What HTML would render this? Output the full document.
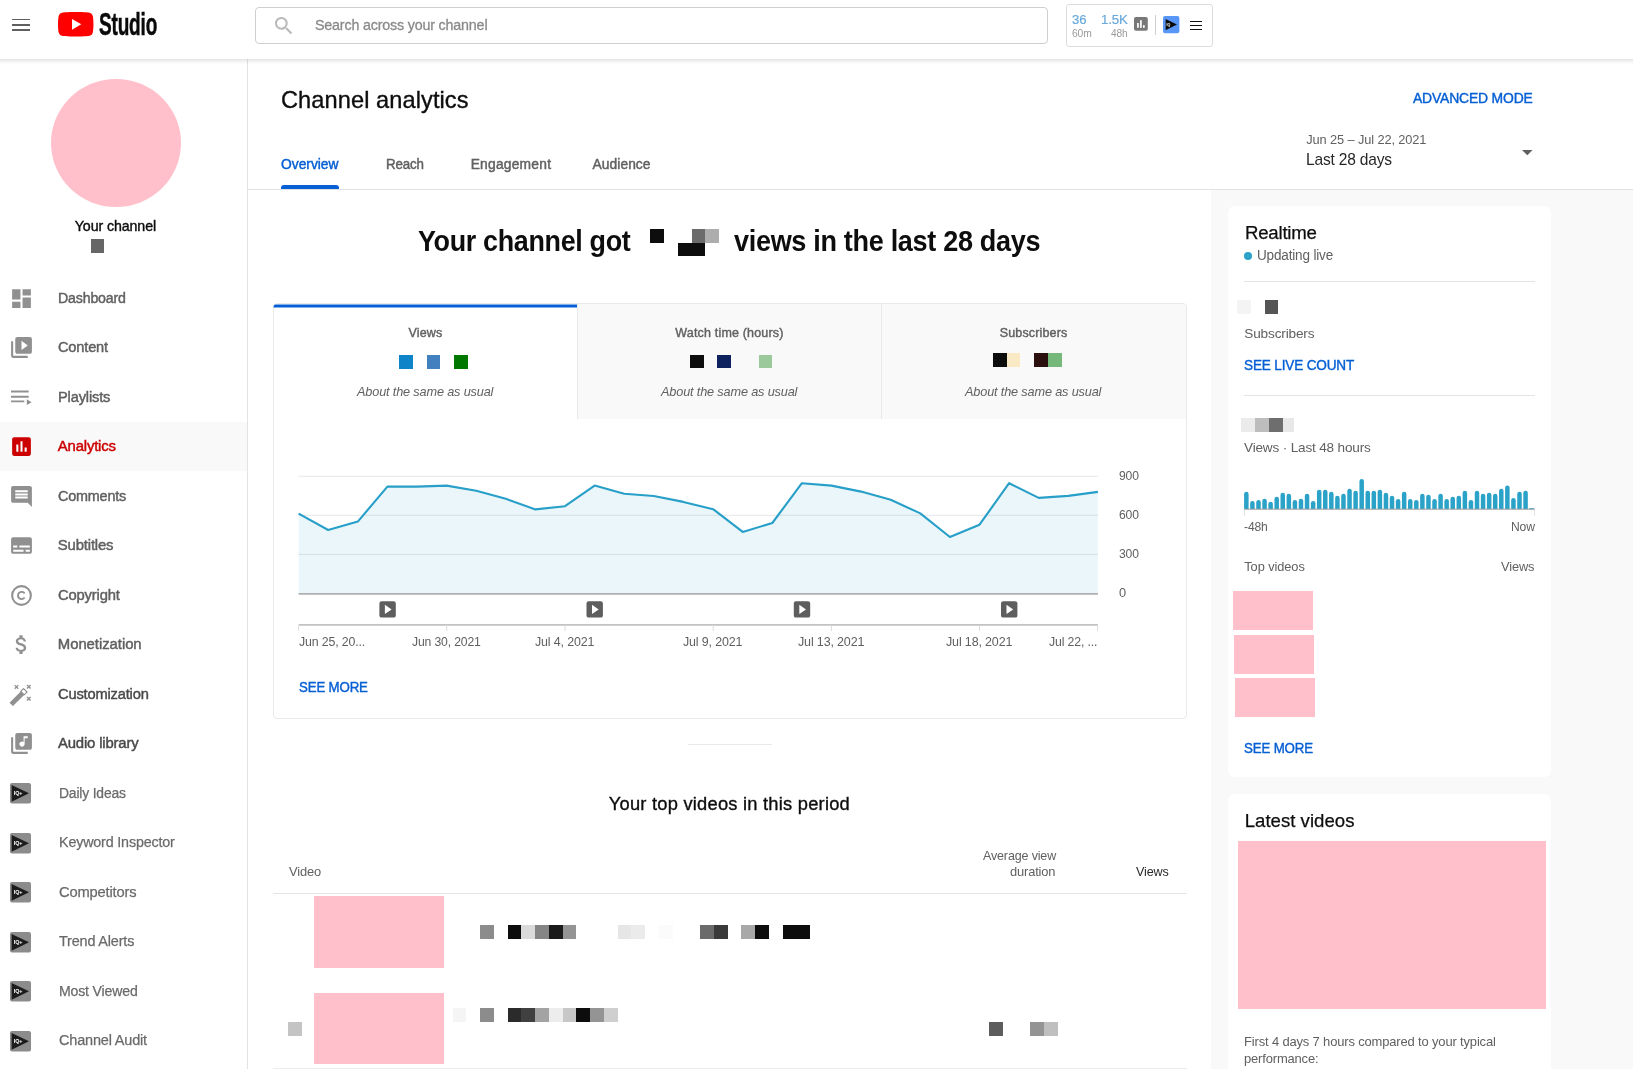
<!DOCTYPE html>
<html lang="en"><head><meta charset="utf-8"><title>Channel analytics - YouTube Studio</title>
<style>
*{box-sizing:border-box;margin:0;padding:0}
html,body{width:1633px;height:1079px;overflow:hidden;background:#fff}
body{position:relative;font-family:"Liberation Sans",Arial,sans-serif;color:#606060}
.t{position:absolute;white-space:nowrap;line-height:1;display:block}
.a{position:absolute;display:block}
svg{position:absolute;display:block;overflow:visible}
.px{position:absolute;display:block}
.pink{position:absolute;background:#ffc0cb}
#app{position:absolute;left:0;top:0;width:1633px;height:1079px;will-change:transform}
</style></head><body>
<div id="app">
<nav>
<div class="a" style="left:0;top:59px;width:248px;height:1010px;background:#fff;border-right:1px solid #e3e3e3"></div>
<div class="a" style="left:50.6px;top:79px;width:130.4px;height:128.4px;border-radius:50%;background:#ffc0cb"></div>
<span class="t" style="left:74.80px;top:219.00px;font-size:14.2px;color:#0d0d0d;letter-spacing:-0.089px;-webkit-text-stroke:0.4px #0d0d0d;">Your channel</span>
<i class="px" style="left:90.7px;top:239.4px;width:13.5px;height:13.5px;background:#666"></i>
<svg style="left:8.6px;top:285.60px" width="25" height="25" viewBox="0 0 24 24" fill="#909090" stroke="#909090" stroke-width="0"><path d="M3 13h8V3H3v10zm0 8h8v-6H3v6zm10 0h8V11h-8v10zm0-18v6h8V3h-8z"/></svg>
<span class="t" style="left:57.80px;top:291.00px;font-size:14.9px;color:#606060;letter-spacing:-0.179px;transform:scaleX(0.9516);transform-origin:0 0;-webkit-text-stroke:0.45px #606060;">Dashboard</span>
<svg style="left:8.6px;top:335.10px" width="25" height="25" viewBox="0 0 24 24" fill="#909090" stroke="#909090" stroke-width="0"><path d="M4 6H2v14c0 1.1.9 2 2 2h14v-2H4V6zm16-4H8c-1.1 0-2 .9-2 2v12c0 1.1.9 2 2 2h12c1.1 0 2-.9 2-2V4c0-1.1-.9-2-2-2zm-8 12.500v-9l6 4.500-6 4.500z"/></svg>
<span class="t" style="left:57.80px;top:340.00px;font-size:14.9px;color:#606060;letter-spacing:-0.179px;transform:scaleX(0.9802);transform-origin:0 0;-webkit-text-stroke:0.45px #606060;">Content</span>
<svg style="left:8.6px;top:384.60px" width="25" height="25" viewBox="0 0 24 24" fill="#909090" stroke="#909090" stroke-width="0"><path d="M1.92 5.18H18.91V7.20H1.92zM1.92 10.27H18.91V12.29H1.92zM1.92 14.78H14.69V16.61H1.92zM17.09 13.73V19.30L21.70 16.51z"/></svg>
<span class="t" style="left:57.80px;top:390.00px;font-size:14.9px;color:#606060;letter-spacing:-0.179px;transform:scaleX(0.9847);transform-origin:0 0;-webkit-text-stroke:0.45px #606060;">Playlists</span>
<div class="a" style="left:0;top:421.75px;width:247px;height:49.5px;background:#f9f9f9"></div>
<svg style="left:8.6px;top:434.10px" width="25" height="25" viewBox="0 0 24 24" fill="#c00" stroke="#c00" stroke-width="0"><path d="M19 3H5c-1.100 0-2 .900-2 2v14c0 1.100.900 2 2 2h14c1.100 0 2-.900 2-2V5c0-1.100-.900-2-2-2zM9 17H7v-7h2v7zm4 0h-2V7h2v10zm4 0h-2v-4h2v4z"/></svg>
<span class="t" style="left:57.80px;top:439.00px;font-size:14.9px;color:#c00;letter-spacing:-0.179px;-webkit-text-stroke:0.45px #c00;">Analytics</span>
<svg style="left:8.6px;top:483.60px" width="25" height="25" viewBox="0 0 24 24" fill="#909090" stroke="#909090" stroke-width="0"><path d="M21.990 4c0-1.100-.890-2-1.990-2H4c-1.100 0-2 .900-2 2v12c0 1.100.900 2 2 2h14l4 4-.010-18zM18 14H6v-2h12v2zm0-3H6V9h12v2zm0-3H6V6h12v2z"/></svg>
<span class="t" style="left:57.80px;top:489.00px;font-size:14.9px;color:#606060;letter-spacing:-0.179px;transform:scaleX(0.9649);transform-origin:0 0;-webkit-text-stroke:0.45px #606060;">Comments</span>
<svg style="left:8.6px;top:533.10px" width="25" height="25" viewBox="0 0 24 24" fill="#909090" stroke="#909090" stroke-width="0"><path d="M20 4H4c-1.100 0-2 .900-2 2v12c0 1.100.900 2 2 2h16c1.100 0 2-.900 2-2V6c0-1.100-.900-2-2-2zM4 12h4v2H4v-2zm10 6H4v-2h10v2zm6 0h-4v-2h4v2zm0-4H10v-2h10v2z"/></svg>
<span class="t" style="left:57.80px;top:538.00px;font-size:14.9px;color:#606060;letter-spacing:-0.169px;-webkit-text-stroke:0.45px #606060;">Subtitles</span>
<svg style="left:8.6px;top:582.60px" width="25" height="25" viewBox="0 0 24 24" fill="#909090" stroke="#909090" stroke-width="0"><circle cx="12" cy="12" r="9" fill="none" stroke-width="2"/><path d="M15 14a3.500 3.500 0 1 1 0-4" fill="none" stroke-width="1.800"/></svg>
<span class="t" style="left:57.80px;top:588.00px;font-size:14.9px;color:#606060;letter-spacing:-0.179px;transform:scaleX(0.9930);transform-origin:0 0;-webkit-text-stroke:0.45px #606060;">Copyright</span>
<svg style="left:8.6px;top:632.10px" width="25" height="25" viewBox="0 0 24 24" fill="#909090" stroke="#909090" stroke-width="0"><path d="M11.800 10.900c-2.270-.590-3-1.200-3-2.150 0-1.090 1.010-1.850 2.700-1.850 1.780 0 2.440.850 2.500 2.100h2.210c-.070-1.720-1.120-3.300-3.210-3.810V3h-3v2.160c-1.940.420-3.500 1.680-3.500 3.610 0 2.310 1.910 3.460 4.700 4.130 2.500.600 3 1.480 3 2.410 0 .690-.490 1.790-2.700 1.790-2.060 0-2.870-.920-2.980-2.100h-2.200c.120 2.190 1.760 3.420 3.680 3.830V21h3v-2.150c1.950-.370 3.500-1.500 3.500-3.550 0-2.840-2.430-3.810-4.700-4.400z"/></svg>
<span class="t" style="left:57.80px;top:637.00px;font-size:14.9px;color:#606060;letter-spacing:-0.053px;-webkit-text-stroke:0.45px #606060;">Monetization</span>
<svg style="left:8.6px;top:681.60px" width="25" height="25" viewBox="0 0 24 24" fill="#909090" stroke="#909090" stroke-width="0"><path d="M0.500 19.800L12.200 8.100l3.300 3.300L3.800 23.100z"/><path d="M11.300 9l2.700-2.700 3.300 3.300-2.700 2.700z" fill="#fff" stroke-width="1.100"/><g stroke-width="1.300" fill="none"><path d="M5.500 3l3.400 3.400m0-3.400l-3.400 3.400"/><path d="M17.300 2.800l3.400 3.400m0-3.400l-3.400 3.400"/><path d="M17.300 14.400l3.400 3.400m0-3.400l-3.400 3.400"/></g></svg>
<span class="t" style="left:58.00px;top:687.00px;font-size:14.9px;color:#4a4a4a;letter-spacing:-0.179px;transform:scaleX(0.9853);transform-origin:0 0;-webkit-text-stroke:0.45px #4a4a4a;">Customization</span>
<svg style="left:8.6px;top:731.10px" width="25" height="25" viewBox="0 0 24 24" fill="#909090" stroke="#909090" stroke-width="0"><path d="M20 2H8c-1.100 0-2 .900-2 2v12c0 1.100.900 2 2 2h12c1.100 0 2-.900 2-2V4c0-1.100-.900-2-2-2zm-2 5h-3v5.500c0 1.380-1.120 2.500-2.500 2.500S10 13.880 10 12.500s1.120-2.500 2.500-2.500c.570 0 1.080.190 1.500.510V5h4v2zM4 6H2v14c0 1.100.900 2 2 2h14v-2H4V6z"/></svg>
<span class="t" style="left:58.00px;top:736.00px;font-size:14.9px;color:#4a4a4a;letter-spacing:-0.179px;-webkit-text-stroke:0.45px #4a4a4a;">Audio library</span>
<svg style="left:9.9px;top:783.00px" width="21" height="20.6" viewBox="0 0 21 20.6"><rect width="21" height="20.6" rx="2" fill="#8c8c8c"/><path d="M1.600 1.900L19 10.300 1.600 18.700z" fill="#1c1c1c"/><text x="3.700" y="12.200" font-size="5.400" font-weight="700" fill="#fff" font-family="Liberation Sans,sans-serif">IQ+</text></svg>
<span class="t" style="left:59.10px;top:786.00px;font-size:14.9px;color:#6a6a6a;letter-spacing:-0.179px;transform:scaleX(0.9316);transform-origin:0 0;-webkit-text-stroke:0.25px #6a6a6a;">Daily Ideas</span>
<svg style="left:9.9px;top:832.50px" width="21" height="20.6" viewBox="0 0 21 20.6"><rect width="21" height="20.6" rx="2" fill="#8c8c8c"/><path d="M1.600 1.900L19 10.300 1.600 18.700z" fill="#1c1c1c"/><text x="3.700" y="12.200" font-size="5.400" font-weight="700" fill="#fff" font-family="Liberation Sans,sans-serif">IQ+</text></svg>
<span class="t" style="left:59.10px;top:835.00px;font-size:14.9px;color:#6a6a6a;letter-spacing:-0.179px;transform:scaleX(0.9615);transform-origin:0 0;-webkit-text-stroke:0.25px #6a6a6a;">Keyword Inspector</span>
<svg style="left:9.9px;top:882.00px" width="21" height="20.6" viewBox="0 0 21 20.6"><rect width="21" height="20.6" rx="2" fill="#8c8c8c"/><path d="M1.600 1.900L19 10.300 1.600 18.700z" fill="#1c1c1c"/><text x="3.700" y="12.200" font-size="5.400" font-weight="700" fill="#fff" font-family="Liberation Sans,sans-serif">IQ+</text></svg>
<span class="t" style="left:59.10px;top:885.00px;font-size:14.9px;color:#6a6a6a;letter-spacing:-0.179px;transform:scaleX(0.9881);transform-origin:0 0;-webkit-text-stroke:0.25px #6a6a6a;">Competitors</span>
<svg style="left:9.9px;top:931.50px" width="21" height="20.6" viewBox="0 0 21 20.6"><rect width="21" height="20.6" rx="2" fill="#8c8c8c"/><path d="M1.600 1.900L19 10.300 1.600 18.700z" fill="#1c1c1c"/><text x="3.700" y="12.200" font-size="5.400" font-weight="700" fill="#fff" font-family="Liberation Sans,sans-serif">IQ+</text></svg>
<span class="t" style="left:59.10px;top:934.00px;font-size:14.9px;color:#6a6a6a;letter-spacing:-0.179px;transform:scaleX(0.9690);transform-origin:0 0;-webkit-text-stroke:0.25px #6a6a6a;">Trend Alerts</span>
<svg style="left:9.9px;top:981.00px" width="21" height="20.6" viewBox="0 0 21 20.6"><rect width="21" height="20.6" rx="2" fill="#8c8c8c"/><path d="M1.600 1.900L19 10.300 1.600 18.700z" fill="#1c1c1c"/><text x="3.700" y="12.200" font-size="5.400" font-weight="700" fill="#fff" font-family="Liberation Sans,sans-serif">IQ+</text></svg>
<span class="t" style="left:59.10px;top:984.00px;font-size:14.9px;color:#6a6a6a;letter-spacing:-0.179px;transform:scaleX(0.9467);transform-origin:0 0;-webkit-text-stroke:0.25px #6a6a6a;">Most Viewed</span>
<svg style="left:9.9px;top:1030.50px" width="21" height="20.6" viewBox="0 0 21 20.6"><rect width="21" height="20.6" rx="2" fill="#8c8c8c"/><path d="M1.600 1.900L19 10.300 1.600 18.700z" fill="#1c1c1c"/><text x="3.700" y="12.200" font-size="5.400" font-weight="700" fill="#fff" font-family="Liberation Sans,sans-serif">IQ+</text></svg>
<span class="t" style="left:59.10px;top:1033.00px;font-size:14.9px;color:#6a6a6a;letter-spacing:-0.179px;transform:scaleX(0.9731);transform-origin:0 0;-webkit-text-stroke:0.25px #6a6a6a;">Channel Audit</span>
</nav>
<main>
<aside>
<div class="a" style="left:1211px;top:190px;width:422px;height:879px;background:#f9f9f9"></div>
<div class="a" style="left:1227.5px;top:206.4px;width:323.700px;height:570.800px;background:#fff;border-radius:7px"></div>
<div class="a" style="left:1227.5px;top:794.3px;width:323.700px;height:274.700px;background:#fff;border-radius:7px 7px 0 0"></div>
<span class="t" style="left:1244.80px;top:224.00px;font-size:18.8px;color:#0d0d0d;letter-spacing:-0.226px;transform:scaleX(0.9917);transform-origin:0 0;-webkit-text-stroke:0.25px #0d0d0d;">Realtime</span>
<i class="a" style="left:1244px;top:251.500px;width:8.400px;height:8.400px;border-radius:50%;background:#2ba3c9"></i>
<span class="t" style="left:1256.80px;top:249.00px;font-size:13.8px;color:#606060;letter-spacing:-0.166px;transform:scaleX(0.9795);transform-origin:0 0;">Updating live</span>
<i class="a" style="left:1244px;top:281px;width:291px;height:1px;background:#e4e4e4"></i>
<i class="px" style="left:1237.30px;top:300.30px;width:13.70px;height:13.70px;background:#f4f4f4"></i>
<i class="px" style="left:1264.80px;top:300.30px;width:13.70px;height:13.70px;background:#555"></i>
<span class="t" style="left:1244.30px;top:327.00px;font-size:13.6px;color:#606060;letter-spacing:-0.163px;">Subscribers</span>
<span class="t" style="left:1244.30px;top:358.00px;font-size:14.2px;color:#065fd4;letter-spacing:-0.170px;transform:scaleX(0.9570);transform-origin:0 0;-webkit-text-stroke:0.4px #065fd4;">SEE LIVE COUNT</span>
<i class="a" style="left:1244px;top:395px;width:291px;height:1px;background:#e4e4e4"></i>
<i class="px" style="left:1241.10px;top:418.10px;width:13.80px;height:13.60px;background:#ebebeb"></i>
<i class="px" style="left:1254.90px;top:418.10px;width:14.00px;height:13.60px;background:#bdbdbd"></i>
<i class="px" style="left:1268.90px;top:418.10px;width:13.80px;height:13.60px;background:#6e6e6e"></i>
<i class="px" style="left:1282.70px;top:418.10px;width:10.90px;height:13.60px;background:#e8e8e8"></i>
<span class="t" style="left:1244.30px;top:441.00px;font-size:13.6px;color:#606060;letter-spacing:-0.163px;transform:scaleX(0.9971);transform-origin:0 0;">Views · Last 48 hours</span>
<svg style="left:0;top:0" width="1633" height="1079" viewBox="0 0 1633 1079">
<path d="M1244.10 509v-15.1a2.250 2.250 0 0 1 4.500 0v15.1z" fill="#2ba3c9"/>
<path d="M1250.17 509v-5.8a2.250 2.250 0 0 1 4.500 0v5.8z" fill="#2ba3c9"/>
<path d="M1256.24 509v-6.8a2.250 2.250 0 0 1 4.500 0v6.8z" fill="#2ba3c9"/>
<path d="M1262.31 509v-8.0a2.250 2.250 0 0 1 4.500 0v8.0z" fill="#2ba3c9"/>
<path d="M1268.38 509v-4.9a2.250 2.250 0 0 1 4.500 0v4.9z" fill="#2ba3c9"/>
<path d="M1274.45 509v-10.0a2.250 2.250 0 0 1 4.500 0v10.0z" fill="#2ba3c9"/>
<path d="M1280.52 509v-14.0a2.250 2.250 0 0 1 4.500 0v14.0z" fill="#2ba3c9"/>
<path d="M1286.59 509v-13.0a2.250 2.250 0 0 1 4.500 0v13.0z" fill="#2ba3c9"/>
<path d="M1292.66 509v-6.8a2.250 2.250 0 0 1 4.500 0v6.8z" fill="#2ba3c9"/>
<path d="M1298.73 509v-8.0a2.250 2.250 0 0 1 4.500 0v8.0z" fill="#2ba3c9"/>
<path d="M1304.80 509v-13.0a2.250 2.250 0 0 1 4.500 0v13.0z" fill="#2ba3c9"/>
<path d="M1310.87 509v-5.8a2.250 2.250 0 0 1 4.500 0v5.8z" fill="#2ba3c9"/>
<path d="M1316.94 509v-17.1a2.250 2.250 0 0 1 4.500 0v17.1z" fill="#2ba3c9"/>
<path d="M1323.01 509v-17.1a2.250 2.250 0 0 1 4.500 0v17.1z" fill="#2ba3c9"/>
<path d="M1329.08 509v-15.1a2.250 2.250 0 0 1 4.500 0v15.1z" fill="#2ba3c9"/>
<path d="M1335.15 509v-10.9a2.250 2.250 0 0 1 4.500 0v10.9z" fill="#2ba3c9"/>
<path d="M1341.22 509v-13.0a2.250 2.250 0 0 1 4.500 0v13.0z" fill="#2ba3c9"/>
<path d="M1347.29 509v-18.1a2.250 2.250 0 0 1 4.500 0v18.1z" fill="#2ba3c9"/>
<path d="M1353.36 509v-16.1a2.250 2.250 0 0 1 4.500 0v16.1z" fill="#2ba3c9"/>
<path d="M1359.43 509v-27.7a2.250 2.250 0 0 1 4.500 0v27.7z" fill="#2ba3c9"/>
<path d="M1365.50 509v-16.1a2.250 2.250 0 0 1 4.500 0v16.1z" fill="#2ba3c9"/>
<path d="M1371.57 509v-16.1a2.250 2.250 0 0 1 4.500 0v16.1z" fill="#2ba3c9"/>
<path d="M1377.64 509v-17.1a2.250 2.250 0 0 1 4.500 0v17.1z" fill="#2ba3c9"/>
<path d="M1383.71 509v-14.0a2.250 2.250 0 0 1 4.500 0v14.0z" fill="#2ba3c9"/>
<path d="M1389.78 509v-10.9a2.250 2.250 0 0 1 4.500 0v10.9z" fill="#2ba3c9"/>
<path d="M1395.85 509v-7.8a2.250 2.250 0 0 1 4.500 0v7.8z" fill="#2ba3c9"/>
<path d="M1401.92 509v-15.1a2.250 2.250 0 0 1 4.500 0v15.1z" fill="#2ba3c9"/>
<path d="M1407.99 509v-7.8a2.250 2.250 0 0 1 4.500 0v7.8z" fill="#2ba3c9"/>
<path d="M1414.06 509v-6.8a2.250 2.250 0 0 1 4.500 0v6.8z" fill="#2ba3c9"/>
<path d="M1420.13 509v-13.0a2.250 2.250 0 0 1 4.500 0v13.0z" fill="#2ba3c9"/>
<path d="M1426.20 509v-11.9a2.250 2.250 0 0 1 4.500 0v11.9z" fill="#2ba3c9"/>
<path d="M1432.27 509v-7.8a2.250 2.250 0 0 1 4.500 0v7.8z" fill="#2ba3c9"/>
<path d="M1438.34 509v-13.0a2.250 2.250 0 0 1 4.500 0v13.0z" fill="#2ba3c9"/>
<path d="M1444.41 509v-7.8a2.250 2.250 0 0 1 4.500 0v7.8z" fill="#2ba3c9"/>
<path d="M1450.48 509v-10.0a2.250 2.250 0 0 1 4.500 0v10.0z" fill="#2ba3c9"/>
<path d="M1456.55 509v-10.9a2.250 2.250 0 0 1 4.500 0v10.9z" fill="#2ba3c9"/>
<path d="M1462.62 509v-16.1a2.250 2.250 0 0 1 4.500 0v16.1z" fill="#2ba3c9"/>
<path d="M1468.69 509v-6.8a2.250 2.250 0 0 1 4.500 0v6.8z" fill="#2ba3c9"/>
<path d="M1474.76 509v-16.1a2.250 2.250 0 0 1 4.500 0v16.1z" fill="#2ba3c9"/>
<path d="M1480.83 509v-13.0a2.250 2.250 0 0 1 4.500 0v13.0z" fill="#2ba3c9"/>
<path d="M1486.90 509v-14.0a2.250 2.250 0 0 1 4.500 0v14.0z" fill="#2ba3c9"/>
<path d="M1492.97 509v-13.0a2.250 2.250 0 0 1 4.500 0v13.0z" fill="#2ba3c9"/>
<path d="M1499.04 509v-18.1a2.250 2.250 0 0 1 4.500 0v18.1z" fill="#2ba3c9"/>
<path d="M1505.11 509v-21.2a2.250 2.250 0 0 1 4.500 0v21.2z" fill="#2ba3c9"/>
<path d="M1511.18 509v-8.8a2.250 2.250 0 0 1 4.500 0v8.8z" fill="#2ba3c9"/>
<path d="M1517.25 509v-15.1a2.250 2.250 0 0 1 4.500 0v15.1z" fill="#2ba3c9"/>
<path d="M1523.32 509v-16.1a2.250 2.250 0 0 1 4.500 0v16.1z" fill="#2ba3c9"/>
<rect x="1529.39" y="508.2" width="4.500" height="1" fill="#2ba3c9"/>
<rect x="1244" y="508.7" width="291" height="1" fill="#9a9a9a"/>
<rect x="1244" y="509.7" width="1" height="6" fill="#e2e2e2"/><rect x="1534" y="509.7" width="1" height="6" fill="#e2e2e2"/>
</svg>
<span class="t" style="left:1244.30px;top:521.00px;font-size:12.3px;color:#606060;letter-spacing:-0.148px;transform:scaleX(0.9845);transform-origin:0 0;">-48h</span>
<span class="t" style="left:1510.70px;top:521.00px;font-size:12.3px;color:#606060;letter-spacing:-0.148px;transform:scaleX(0.9831);transform-origin:0 0;">Now</span>
<span class="t" style="left:1244.30px;top:561.00px;font-size:12.8px;color:#606060;letter-spacing:-0.077px;">Top videos</span>
<span class="t" style="left:1501.10px;top:561.00px;font-size:12.8px;color:#606060;letter-spacing:-0.128px;">Views</span>
<div class="pink" style="left:1232.900px;top:590.900px;width:79.900px;height:38.800px"></div>
<div class="pink" style="left:1233.900px;top:634.900px;width:80.100px;height:38.900px"></div>
<div class="pink" style="left:1234.800px;top:678px;width:80.100px;height:38.900px"></div>
<span class="t" style="left:1244.30px;top:741.00px;font-size:14.2px;color:#065fd4;letter-spacing:-0.170px;transform:scaleX(0.9367);transform-origin:0 0;-webkit-text-stroke:0.4px #065fd4;">SEE MORE</span>
<span class="t" style="left:1244.70px;top:812.00px;font-size:18.6px;color:#0d0d0d;letter-spacing:0.016px;-webkit-text-stroke:0.25px #0d0d0d;">Latest videos</span>
<div class="pink" style="left:1238px;top:841px;width:308px;height:167.600px"></div>
<span class="t" style="left:1244.40px;top:1035.00px;font-size:13.1px;color:#606060;letter-spacing:-0.157px;transform:scaleX(0.9903);transform-origin:0 0;">First 4 days 7 hours compared to your typical</span>
<span class="t" style="left:1244.40px;top:1052.00px;font-size:13.1px;color:#606060;letter-spacing:-0.157px;transform:scaleX(0.9887);transform-origin:0 0;">performance:</span>
</aside>
<section>
<span class="t" style="left:281.00px;top:89.00px;font-size:23.6px;color:#0d0d0d;letter-spacing:0.082px;-webkit-text-stroke:0.35px #0d0d0d;">Channel analytics</span>
<span class="t" style="left:1413.00px;top:91.00px;font-size:14.2px;color:#065fd4;letter-spacing:-0.170px;transform:scaleX(0.9800);transform-origin:0 0;-webkit-text-stroke:0.4px #065fd4;">ADVANCED MODE</span>
<span class="t" style="left:1306.20px;top:134.00px;font-size:12.8px;color:#606060;letter-spacing:-0.105px;">Jun 25 – Jul 22, 2021</span>
<span class="t" style="left:1306.20px;top:151.00px;font-size:16.2px;color:#282828;letter-spacing:-0.194px;transform:scaleX(0.9607);transform-origin:0 0;">Last 28 days</span>
<svg style="left:1521.5px;top:150.3px" width="10.6" height="5.2" viewBox="0 0 10.6 5.2"><path d="M0 0h10.600L5.300 5.200z" fill="#5f5f5f"/></svg>
<span class="t" style="left:281.00px;top:158.00px;font-size:13.8px;color:#065fd4;letter-spacing:-0.002px;-webkit-text-stroke:0.45px #065fd4;">Overview</span>
<span class="t" style="left:385.60px;top:158.00px;font-size:13.8px;color:#606060;letter-spacing:-0.166px;transform:scaleX(0.9661);transform-origin:0 0;-webkit-text-stroke:0.45px #606060;">Reach</span>
<span class="t" style="left:470.70px;top:158.00px;font-size:13.8px;color:#606060;letter-spacing:0.227px;-webkit-text-stroke:0.45px #606060;">Engagement</span>
<span class="t" style="left:592.60px;top:158.00px;font-size:13.8px;color:#606060;letter-spacing:0.051px;-webkit-text-stroke:0.45px #606060;">Audience</span>
<i class="a" style="left:281px;top:185.3px;width:57.6px;height:3.7px;background:#065fd4;border-radius:3px 3px 0 0"></i>
<i class="a" style="left:248px;top:189px;width:1385px;height:1px;background:#e2e2e2"></i>
</section>
<section>
<span class="t" style="left:418.10px;top:226.00px;font-size:30.0px;color:#0d0d0d;letter-spacing:-0.360px;transform:scaleX(0.8960);transform-origin:0 0;font-weight:700;">Your channel got</span>
<span class="t" style="left:734.10px;top:226.00px;font-size:30.0px;color:#0d0d0d;letter-spacing:-0.360px;transform:scaleX(0.9018);transform-origin:0 0;font-weight:700;">views in the last 28 days</span>
<i class="px" style="left:650.20px;top:229.00px;width:13.80px;height:13.80px;background:#0d0d0d"></i>
<i class="px" style="left:678.00px;top:242.80px;width:27.40px;height:13.60px;background:#0d0d0d"></i>
<i class="px" style="left:691.90px;top:229.00px;width:13.50px;height:13.80px;background:#6b6b6b"></i>
<i class="px" style="left:705.40px;top:229.00px;width:13.70px;height:13.80px;background:#adadad"></i>
<div class="a" style="left:272.5px;top:303px;width:914px;height:416px;border:1px solid #e9e9e9;border-radius:4px;background:#fff"></div>
<div class="a" style="left:577px;top:304px;width:608.5px;height:114.7px;background:#f9f9f9;border-radius:0 3px 0 0"></div>
<i class="a" style="left:576.7px;top:304px;width:1px;height:114.7px;background:#e9e9e9"></i>
<i class="a" style="left:881.3px;top:304px;width:1px;height:114.7px;background:#e9e9e9"></i>
<svg style="left:0;top:0" width="1633" height="320" viewBox="0 0 1633 320"><path d="M273.600 307.400V306.300a2 2 0 0 1 2-1.900H577v3z" fill="#065fd4"/></svg>
<span class="t" style="left:408.50px;top:327.00px;font-size:12.5px;color:#606060;letter-spacing:0.146px;-webkit-text-stroke:0.4px #606060;">Views</span>
<span class="t" style="left:675.30px;top:327.00px;font-size:12.5px;color:#606060;letter-spacing:0.176px;-webkit-text-stroke:0.4px #606060;">Watch time (hours)</span>
<span class="t" style="left:999.80px;top:327.00px;font-size:12.5px;color:#606060;letter-spacing:0.140px;-webkit-text-stroke:0.4px #606060;">Subscribers</span>
<span class="t" style="left:356.90px;top:385.00px;font-size:13.2px;color:#606060;letter-spacing:-0.158px;transform:scaleX(0.9626);transform-origin:0 0;font-style:italic;">About the same as usual</span>
<span class="t" style="left:661.20px;top:385.00px;font-size:13.2px;color:#606060;letter-spacing:-0.158px;transform:scaleX(0.9626);transform-origin:0 0;font-style:italic;">About the same as usual</span>
<span class="t" style="left:965.30px;top:385.00px;font-size:13.2px;color:#606060;letter-spacing:-0.158px;transform:scaleX(0.9626);transform-origin:0 0;font-style:italic;">About the same as usual</span>
<i class="px" style="left:399.30px;top:355.10px;width:13.80px;height:13.60px;background:#0f83c7"></i>
<i class="px" style="left:426.70px;top:355.10px;width:13.80px;height:13.60px;background:#4380bf"></i>
<i class="px" style="left:454.20px;top:355.10px;width:13.80px;height:13.60px;background:#007800"></i>
<i class="px" style="left:689.80px;top:354.90px;width:13.90px;height:13.60px;background:#0d0d0d"></i>
<i class="px" style="left:717.20px;top:354.90px;width:13.90px;height:13.60px;background:#0e2260"></i>
<i class="px" style="left:758.50px;top:354.90px;width:13.90px;height:13.60px;background:#9cc99c"></i>
<i class="px" style="left:993.00px;top:353.20px;width:13.90px;height:13.60px;background:#0d0d0d"></i>
<i class="px" style="left:1006.90px;top:353.20px;width:13.60px;height:13.60px;background:#f9e9c5"></i>
<i class="px" style="left:1034.00px;top:353.20px;width:13.90px;height:13.60px;background:#2b0f0f"></i>
<i class="px" style="left:1047.90px;top:353.20px;width:13.90px;height:13.60px;background:#76b87a"></i>
<svg style="left:0;top:0" width="1633" height="1079" viewBox="0 0 1633 1079">
<rect x="298.6" y="475.8" width="799.3" height="1" fill="#e6e6e6"/>
<rect x="298.6" y="514.8" width="799.3" height="1" fill="#e6e6e6"/>
<rect x="298.6" y="553.9" width="799.3" height="1" fill="#e6e6e6"/>
<polygon points="298.6,593.6 298.6,513.7 328.2,530.0 357.8,521.6 387.4,486.6 417.0,486.6 446.6,485.6 476.2,490.7 505.8,498.8 535.4,509.4 565.0,506.2 594.6,485.6 624.2,493.8 653.8,496.0 683.4,501.9 713.1,509.2 742.7,531.9 772.3,523.0 801.9,483.2 831.5,485.6 861.1,491.6 890.7,499.8 920.3,513.4 949.9,537.0 979.5,524.7 1009.1,483.2 1038.7,497.9 1068.3,495.9 1097.9,491.9 1097.9,593.6" fill="#2ea2cc" fill-opacity="0.095"/>
<polyline points="298.6,513.7 328.2,530.0 357.8,521.6 387.4,486.6 417.0,486.6 446.6,485.6 476.2,490.7 505.8,498.8 535.4,509.4 565.0,506.2 594.6,485.6 624.2,493.8 653.8,496.0 683.4,501.9 713.1,509.2 742.7,531.9 772.3,523.0 801.9,483.2 831.5,485.6 861.1,491.6 890.7,499.8 920.3,513.4 949.9,537.0 979.5,524.7 1009.1,483.2 1038.7,497.9 1068.3,495.9 1097.9,491.9" fill="none" stroke="#279fc8" stroke-width="2.100" stroke-linejoin="round"/>
<rect x="298.6" y="593.1" width="799.3" height="1.600" fill="#a9a9a9"/>
<rect x="298.6" y="624.1" width="799.3" height="1.600" fill="#bdbdbd"/>
<rect x="298.1" y="625.5" width="1" height="5.500" fill="#dcdcdc"/>
<rect x="446.2" y="625.5" width="1" height="5.500" fill="#dcdcdc"/>
<rect x="564.5" y="625.5" width="1" height="5.500" fill="#dcdcdc"/>
<rect x="712.7" y="625.5" width="1" height="5.500" fill="#dcdcdc"/>
<rect x="830.9" y="625.5" width="1" height="5.500" fill="#dcdcdc"/>
<rect x="979.0" y="625.5" width="1" height="5.500" fill="#dcdcdc"/>
<rect x="1097.1" y="625.5" width="1" height="5.500" fill="#dcdcdc"/>
<rect x="379.4" y="601.2" width="16.400" height="16.400" rx="2.200" fill="#5e5e5e"/>
<path d="M384.9 604.700v9.400l6.700-4.700z" fill="#fff"/>
<rect x="586.5" y="601.2" width="16.400" height="16.400" rx="2.200" fill="#5e5e5e"/>
<path d="M592.0 604.700v9.400l6.700-4.700z" fill="#fff"/>
<rect x="793.8" y="601.2" width="16.400" height="16.400" rx="2.200" fill="#5e5e5e"/>
<path d="M799.3 604.700v9.400l6.700-4.700z" fill="#fff"/>
<rect x="1001.0" y="601.2" width="16.400" height="16.400" rx="2.200" fill="#5e5e5e"/>
<path d="M1006.5 604.700v9.400l6.700-4.700z" fill="#fff"/>
</svg>
<span class="t" style="left:1118.90px;top:470.00px;font-size:12.8px;color:#606060;letter-spacing:-0.154px;transform:scaleX(0.9502);transform-origin:0 0;">900</span>
<span class="t" style="left:1118.90px;top:509.00px;font-size:12.8px;color:#606060;letter-spacing:-0.154px;transform:scaleX(0.9502);transform-origin:0 0;">600</span>
<span class="t" style="left:1118.90px;top:548.00px;font-size:12.8px;color:#606060;letter-spacing:-0.154px;transform:scaleX(0.9502);transform-origin:0 0;">300</span>
<span class="t" style="left:1118.90px;top:587.00px;font-size:12.8px;color:#606060;">0</span>
<span class="t" style="left:298.80px;top:635.00px;font-size:13.0px;color:#606060;letter-spacing:-0.156px;transform:scaleX(0.9501);transform-origin:0 0;">Jun 25, 20...</span>
<span class="t" style="left:411.55px;top:635.00px;font-size:13.0px;color:#606060;letter-spacing:-0.156px;transform:scaleX(0.9379);transform-origin:0 0;">Jun 30, 2021</span>
<span class="t" style="left:535.30px;top:635.00px;font-size:13.0px;color:#606060;letter-spacing:-0.156px;transform:scaleX(0.9574);transform-origin:0 0;">Jul 4, 2021</span>
<span class="t" style="left:683.30px;top:635.00px;font-size:13.0px;color:#606060;letter-spacing:-0.156px;transform:scaleX(0.9574);transform-origin:0 0;">Jul 9, 2021</span>
<span class="t" style="left:798.20px;top:635.00px;font-size:13.0px;color:#606060;letter-spacing:-0.156px;transform:scaleX(0.9607);transform-origin:0 0;">Jul 13, 2021</span>
<span class="t" style="left:946.20px;top:635.00px;font-size:13.0px;color:#606060;letter-spacing:-0.156px;transform:scaleX(0.9607);transform-origin:0 0;">Jul 18, 2021</span>
<span class="t" style="left:1049.20px;top:635.00px;font-size:13.0px;color:#606060;letter-spacing:-0.156px;transform:scaleX(0.9455);transform-origin:0 0;">Jul 22, ...</span>
<span class="t" style="left:298.80px;top:680.00px;font-size:14.2px;color:#065fd4;letter-spacing:-0.170px;transform:scaleX(0.9354);transform-origin:0 0;-webkit-text-stroke:0.4px #065fd4;">SEE MORE</span>
</section>
<section>
<i class="a" style="left:687.5px;top:743.6px;width:84px;height:1px;background:#e9e9e9"></i>
<span class="t" style="left:608.80px;top:795.00px;font-size:18.3px;color:#0d0d0d;letter-spacing:0.237px;-webkit-text-stroke:0.35px #0d0d0d;">Your top videos in this period</span>
<span class="t" style="left:289.20px;top:865.00px;font-size:13.0px;color:#606060;letter-spacing:-0.156px;transform:scaleX(0.9910);transform-origin:0 0;">Video</span>
<span class="t" style="left:982.60px;top:849.00px;font-size:13.0px;color:#606060;letter-spacing:-0.156px;transform:scaleX(0.9620);transform-origin:0 0;">Average view</span>
<span class="t" style="left:1010.30px;top:865.00px;font-size:13.0px;color:#606060;letter-spacing:-0.156px;transform:scaleX(0.9916);transform-origin:0 0;">duration</span>
<span class="t" style="left:1136.40px;top:865.00px;font-size:13.0px;color:#2a2a2a;letter-spacing:-0.156px;transform:scaleX(0.9669);transform-origin:0 0;">Views</span>
<i class="a" style="left:272.5px;top:893px;width:914px;height:1px;background:#e4e4e4"></i>
<i class="a" style="left:272.5px;top:1068px;width:914px;height:1px;background:#ececec"></i>
<div class="pink" style="left:314px;top:896.2px;width:129.800px;height:71.400px"></div>
<div class="pink" style="left:314px;top:993.2px;width:129.800px;height:71.300px"></div>
<i class="px" style="left:480.00px;top:925.30px;width:13.85px;height:13.90px;background:#8c8c8c"></i>
<i class="px" style="left:507.50px;top:925.30px;width:13.85px;height:13.90px;background:#0d0d0d"></i>
<i class="px" style="left:521.25px;top:925.30px;width:13.85px;height:13.90px;background:#dadada"></i>
<i class="px" style="left:535.00px;top:925.30px;width:13.85px;height:13.90px;background:#858585"></i>
<i class="px" style="left:548.75px;top:925.30px;width:13.85px;height:13.90px;background:#1a1a1a"></i>
<i class="px" style="left:562.50px;top:925.30px;width:13.85px;height:13.90px;background:#949494"></i>
<i class="px" style="left:617.50px;top:925.30px;width:13.85px;height:13.90px;background:#e6e6e6"></i>
<i class="px" style="left:631.25px;top:925.30px;width:13.85px;height:13.90px;background:#ebebeb"></i>
<i class="px" style="left:658.75px;top:925.30px;width:13.85px;height:13.90px;background:#fbfbfb"></i>
<i class="px" style="left:700.00px;top:925.30px;width:13.85px;height:13.90px;background:#6b6b6b"></i>
<i class="px" style="left:713.75px;top:925.30px;width:13.85px;height:13.90px;background:#3a3a3a"></i>
<i class="px" style="left:741.25px;top:925.30px;width:13.85px;height:13.90px;background:#a8a8a8"></i>
<i class="px" style="left:755.00px;top:925.30px;width:13.85px;height:13.90px;background:#0d0d0d"></i>
<i class="px" style="left:782.50px;top:925.30px;width:13.85px;height:13.90px;background:#0d0d0d"></i>
<i class="px" style="left:796.25px;top:925.30px;width:13.85px;height:13.90px;background:#0d0d0d"></i>
<i class="px" style="left:452.50px;top:1008.30px;width:13.85px;height:13.90px;background:#f5f5f5"></i>
<i class="px" style="left:480.00px;top:1008.30px;width:13.85px;height:13.90px;background:#8c8c8c"></i>
<i class="px" style="left:507.50px;top:1008.30px;width:13.85px;height:13.90px;background:#2b2b2b"></i>
<i class="px" style="left:521.25px;top:1008.30px;width:13.85px;height:13.90px;background:#404040"></i>
<i class="px" style="left:535.00px;top:1008.30px;width:13.85px;height:13.90px;background:#a3a3a3"></i>
<i class="px" style="left:548.75px;top:1008.30px;width:13.85px;height:13.90px;background:#ededed"></i>
<i class="px" style="left:562.50px;top:1008.30px;width:13.85px;height:13.90px;background:#c7c7c7"></i>
<i class="px" style="left:576.25px;top:1008.30px;width:13.85px;height:13.90px;background:#0d0d0d"></i>
<i class="px" style="left:590.00px;top:1008.30px;width:13.85px;height:13.90px;background:#949494"></i>
<i class="px" style="left:603.75px;top:1008.30px;width:13.85px;height:13.90px;background:#cfcfcf"></i>
<i class="px" style="left:288.00px;top:1022.20px;width:13.70px;height:13.70px;background:#c4c4c4"></i>
<i class="px" style="left:988.90px;top:1022.00px;width:13.90px;height:13.90px;background:#5c5c5c"></i>
<i class="px" style="left:1030.00px;top:1022.00px;width:13.90px;height:13.90px;background:#949494"></i>
<i class="px" style="left:1043.90px;top:1022.00px;width:14.10px;height:13.90px;background:#bfbfbf"></i>
</section>
</main>
<div class="a" style="left:0;top:59px;width:1633px;height:6px;background:linear-gradient(to bottom,rgba(0,0,0,.10),rgba(0,0,0,.03) 55%,rgba(0,0,0,0));z-index:5"></div>
<header class="a" style="left:0;top:0;width:1633px;height:59px;background:#fff;z-index:6">
<i class="a" style="left:11.6px;top:18.6px;width:18.8px;height:1.7px;background:#5f5f5f"></i>
<i class="a" style="left:11.6px;top:24.0px;width:18.8px;height:1.7px;background:#5f5f5f"></i>
<i class="a" style="left:11.6px;top:29.2px;width:18.8px;height:1.7px;background:#5f5f5f"></i>
<svg style="left:58.2px;top:12.2px" width="35.5" height="24.6" viewBox="0 0 35.5 24.6"><path d="M34.76 3.84A4.46 4.46 0 0 0 31.62 0.72C28.85 0 17.75 0 17.75 0S6.65 0 3.88 0.72A4.46 4.46 0 0 0 0.74 3.84C0 6.6 0 12.3 0 12.3s0 5.7 0.74 8.46a4.46 4.46 0 0 0 3.14 3.12c2.77 0.72 13.87 0.72 13.87 0.72s11.1 0 13.87-0.72a4.46 4.46 0 0 0 3.14-3.12c0.74-2.76 0.74-8.46 0.74-8.46s0-5.7-0.74-8.46z" fill="#f00"/><path d="M14 17.7V6.9l9.3 5.4z" fill="#fff"/></svg>
<span class="t" style="left:99.2px;top:9.2px;font-size:30.5px;font-weight:700;color:#0a0a0a;transform-origin:0 0;transform:scaleX(.624);letter-spacing:-0.3px;-webkit-text-stroke:0.5px #0a0a0a">Studio</span>
<div class="a" style="left:255px;top:6.5px;width:792.5px;height:37px;border:1px solid #cfcfcf;border-radius:4px;background:#fff"></div>
<svg style="left:272.2px;top:14.2px" width="23.6" height="23.6" viewBox="0 0 24 24"><path d="M15.5 14h-.79l-.28-.27A6.47 6.47 0 0 0 16 9.5 6.500 6.500 0 1 0 9.500 16c1.610 0 3.090-.590 4.230-1.570l.270.280v.790l5 4.990L20.490 19l-4.990-5zm-6 0C7.010 14 5 11.990 5 9.500S7.010 5 9.500 5 14 7.010 14 9.500 11.990 14 9.500 14z" fill="#b9b9b9"/></svg>
<span class="t" style="left:314.60px;top:18.00px;font-size:14.3px;color:#8a8a8a;letter-spacing:-0.172px;transform:scaleX(0.9979);transform-origin:0 0;-webkit-text-stroke:0.3px #8a8a8a;">Search across your channel</span>
<div class="a" style="left:1066px;top:4px;width:147px;height:42.5px;border:1px solid #dcdcdc;border-radius:3px;background:#fff"></div>
<span class="t" style="left:1071.80px;top:13.00px;font-size:13.4px;color:#6aaadb;letter-spacing:-0.161px;transform:scaleX(0.9834);transform-origin:0 0;-webkit-text-stroke:0.2px #6aaadb;">36</span>
<span class="t" style="left:1071.80px;top:29.00px;font-size:10.4px;color:#9a9a9a;letter-spacing:-0.125px;transform:scaleX(0.9909);transform-origin:0 0;">60m</span>
<span class="t" style="left:1101.20px;top:13.00px;font-size:13.4px;color:#6aaadb;letter-spacing:-0.161px;transform:scaleX(0.9895);transform-origin:0 0;-webkit-text-stroke:0.2px #6aaadb;">1.5K</span>
<span class="t" style="left:1110.60px;top:29.00px;font-size:10.4px;color:#9a9a9a;letter-spacing:-0.125px;transform:scaleX(0.9765);transform-origin:0 0;">48h</span>
<svg style="left:1134.3px;top:16.9px" width="13.8" height="13.8" viewBox="0 0 13.8 13.8"><rect width="13.8" height="13.8" rx="2" fill="#787878"/><rect x="3.1" y="6" width="1.7" height="4.8" fill="#fff"/><rect x="6.05" y="3.2" width="1.7" height="7.6" fill="#fff"/><rect x="9" y="8.2" width="1.7" height="2.6" fill="#fff"/></svg>
<i class="a" style="left:1154.6px;top:15.3px;width:1px;height:19.6px;background:#cfcfcf"></i>
<svg style="left:1163px;top:16px" width="16.4" height="17.2" viewBox="0 0 16.4 17.2"><rect width="16.4" height="17.2" rx="2" fill="#5897f7"/><path d="M2.6 2.9L14 8.6 2.6 14.3z" fill="#0b0b0b"/><text x="3.6" y="10" font-size="3.6" font-weight="700" fill="#fff" font-family="Liberation Sans,sans-serif">IQ</text></svg>
<i class="a" style="left:1189.7px;top:20.6px;width:12.7px;height:1.5px;background:#111"></i>
<i class="a" style="left:1189.7px;top:24.6px;width:12.7px;height:1.5px;background:#111"></i>
<i class="a" style="left:1189.7px;top:28.8px;width:12.7px;height:1.5px;background:#111"></i>
</header>
</div>
</body></html>
